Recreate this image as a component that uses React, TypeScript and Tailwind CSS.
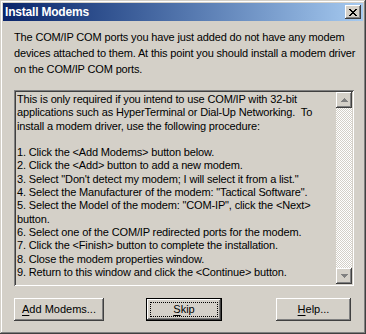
const raised =
  "shadow-[inset_-1px_-1px_#404040,inset_1px_1px_#ffffff,inset_-2px_-2px_#808080,inset_2px_2px_#d4d0c8]";

const steps = [
  "This is only required if you intend to use COM/IP with 32-bit",
  "applications such as HyperTerminal or Dial-Up Networking.  To",
  "install a modem driver, use the following procedure:",
  "",
  "1. Click the <Add Modems> button below.",
  "2. Click the <Add> button to add a new modem.",
  '3. Select "Don\'t detect my modem; I will select it from a list."',
  '4. Select the Manufacturer of the modem: "Tactical Software".',
  '5. Select the Model of the modem: "COM-IP", click the <Next>',
  "button.",
  "6. Select one of the COM/IP redirected ports for the modem.",
  "7. Click the <Finish> button to complete the installation.",
  "8. Close the modem properties window.",
  "9. Return to this window and click the <Continue> button.",
];

function ScrollArrow({ up }: { up?: boolean }) {
  return (
    <div className={`flex h-4 w-4 items-center justify-center bg-[#d4d0c8] ${raised}`}>
      <svg width="7" height="4" viewBox="0 0 7 4" className={up ? "" : "rotate-180"}>
        <path d="M3 0h1v1h1v1h1v1h1v1H0V3h1V2h1V1h1z" fill="#808080" />
      </svg>
    </div>
  );
}

function Label({ first, rest }: { first: string; rest: string }) {
  return (
    <span>
      <span className="underline underline-offset-2">{first}</span>
      {rest}
    </span>
  );
}

function Button({ width, first, rest, isDefault }: { width: string; first: string; rest: string; isDefault?: boolean }) {
  if (isDefault) {
    return (
      <div className={`${width} h-[23px] border border-black`}>
        <div className={`h-full w-full p-[3px] ${raised}`}>
          <div className="flex h-full w-full items-center justify-center border border-dotted border-black">
            <Label first={first} rest={rest} />
          </div>
        </div>
      </div>
    );
  }
  return (
    <div className={`flex ${width} h-[23px] items-center justify-center ${raised}`}>
      <Label first={first} rest={rest} />
    </div>
  );
}

export default function App() {
  return (
    <div
      className="h-[334px] w-[366px] bg-[#d4d0c8] text-black"
      style={{ fontFamily: '"Liberation Sans", Arial, sans-serif' }}
    >
      <div className="flex h-full w-full flex-col p-[3px] shadow-[inset_-1px_-1px_#404040,inset_1px_1px_#d4d0c8,inset_-2px_-2px_#808080,inset_2px_2px_#ffffff]">
        {/* Title bar */}
        <div className="flex h-[18px] items-center bg-gradient-to-r from-[#0a246a] to-[#a6caf0] px-[2px]">
          <span className="flex-1 text-[12px] font-bold leading-none tracking-[-0.2px] text-white">
            Install Modems
          </span>
          <div className={`flex h-[14px] w-[16px] items-center justify-center bg-[#d4d0c8] ${raised}`}>
            <svg width="8" height="7" viewBox="0 0 8 7">
              <path d="M0 0h2v1h1v1h2V1h1V0h2v1H7v1H6v1H5v1h1v1h1v1h1v1H6V6H5V5H3v1H2v1H0V6h1V5h1V4h1V3H2V2H1V1H0z" fill="#000" />
            </svg>
          </div>
        </div>

        {/* Body */}
        <div className="flex flex-1 flex-col px-[11px] pt-[8px]">
          <p className="whitespace-nowrap text-[11px] leading-[16px] tracking-[-0.15px]">
            The COM/IP COM ports you have just added do not have any modem
            <br />
            devices attached to them. At this point you should install a modem driver
            <br />
            on the COM/IP COM ports.
          </p>

          <div className="mt-[13px] flex h-[196px] w-[340px] bg-[#d4d0c8] p-[2px] shadow-[inset_1px_1px_#808080,inset_-1px_-1px_#ffffff,inset_2px_2px_#404040,inset_-2px_-2px_#d4d0c8]">
            <div className="flex-1 overflow-hidden pl-[1px] pt-[1px] text-[11px] tracking-[-0.15px] whitespace-pre">
              {steps.map((s, i) => (
                <div key={i} className="h-[13.3px] leading-[13.3px]">{s}</div>
              ))}
            </div>
            <div className="flex w-4 flex-col bg-[repeating-conic-gradient(#ffffff_0_25%,#d4d0c8_0_50%)] bg-[length:2px_2px]">
              <ScrollArrow up />
              <div className="flex-1" />
              <ScrollArrow />
            </div>
          </div>

          <div className="mt-[12px] flex items-center text-[11px]">
            <Button width="w-[90px]" first="A" rest="dd Modems..." />
            <div className="ml-[42px]">
              <Button width="w-[76px]" first="S" rest="kip" isDefault />
            </div>
            <div className="ml-auto mr-[1px]">
              <Button width="w-[75px]" first="H" rest="elp..." />
            </div>
          </div>
        </div>
      </div>
    </div>
  );
}
